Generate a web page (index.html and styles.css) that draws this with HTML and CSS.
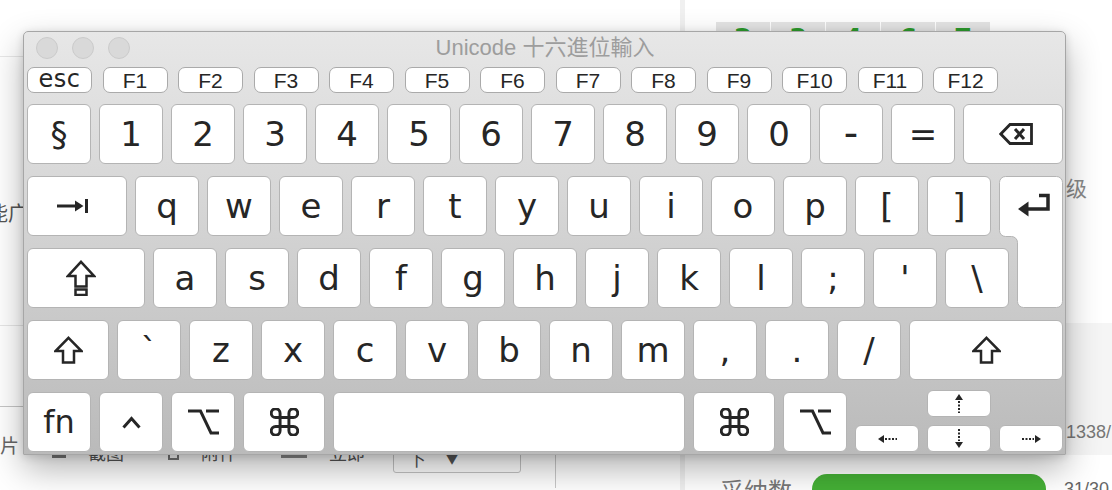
FILE: index.html
```html
<!DOCTYPE html>
<html lang="zh">
<head>
  <meta charset="UTF-8">
  <meta name="viewport" content="width=device-width, initial-scale=1.0">
  <title>Keyboard Viewer</title>
  <link rel="stylesheet" href="styles.css">
</head>
<body>
  <div class="page">
    <section class="main">
      <div class="main-head"></div>
      <div class="intro"><p>能广告</p></div>
      <div class="editor"></div>
      <div class="toolbar">
        <div class="toolbar-left">
          <span class="tb-label">图片</span>
          <div class="tools">
            <span class="tool"><i class="ico ico-shot"></i>截图</span>
            <span class="tool"><i class="ico ico-file"></i>附件</span>
            <span class="tool"><i class="ico ico-now"></i>立即</span>
            <span class="select">下 <b>▼</b></span>
          </div>
        </div>
      </div>
    </section>

    <aside class="side">
      <div class="pager">
        <span>2</span><span>3</span><span>4</span><span>6</span><span>7</span>
      </div>
      <div class="level">级</div>
      <div class="stats"><span>1338/</span></div>
      <div class="adopt">
        <span class="adopt-label">采纳数</span>
        <span class="adopt-bar"></span>
        <span class="adopt-num">31/30</span>
      </div>
    </aside>
  </div>

  <div class="kbd">
    <div class="kbd-titlebar">
      <div class="lights"><span></span><span></span><span></span></div>
      <div class="kbd-title">Unicode 十六進位輸入</div>
      <div></div>
    </div>

    <div class="fn-row">
      <div class="fkey fkey-esc">esc</div>
      <div class="fkey">F1</div>
      <div class="fkey">F2</div>
      <div class="fkey">F3</div>
      <div class="fkey">F4</div>
      <div class="fkey">F5</div>
      <div class="fkey">F6</div>
      <div class="fkey">F7</div>
      <div class="fkey">F8</div>
      <div class="fkey">F9</div>
      <div class="fkey">F10</div>
      <div class="fkey">F11</div>
      <div class="fkey">F12</div>
    </div>

    <div class="keys">
      <div class="row">
        <div class="key">§</div>
        <div class="key">1</div>
        <div class="key">2</div>
        <div class="key">3</div>
        <div class="key">4</div>
        <div class="key">5</div>
        <div class="key">6</div>
        <div class="key">7</div>
        <div class="key">8</div>
        <div class="key">9</div>
        <div class="key">0</div>
        <div class="key key-minus">-</div>
        <div class="key">=</div>
        <div class="key key-grow key-delete">
          <svg width="34" height="22" viewBox="0 0 34 22">
            <path d="M11 1.5 H32.5 V20.5 H11 L1.8 11 Z" fill="none" stroke="#262626" stroke-width="2.8" stroke-linejoin="miter"/>
            <path d="M16 6 L25 16 M25 6 L16 16" stroke="#262626" stroke-width="3"/>
          </svg>
        </div>
      </div>

      <div class="mid">
        <div class="row row-tab">
          <div class="key key-tab">
            <svg width="32" height="16" viewBox="0 0 32 16">
              <rect x="0" y="6.5" width="20" height="3" fill="#262626"/>
              <path d="M26.5 8 L18 2.5 V13.5 Z" fill="#262626"/>
              <rect x="28" y="1" width="3" height="14" fill="#262626"/>
            </svg>
          </div>
          <div class="key">q</div>
          <div class="key">w</div>
          <div class="key">e</div>
          <div class="key">r</div>
          <div class="key">t</div>
          <div class="key">y</div>
          <div class="key">u</div>
          <div class="key">i</div>
          <div class="key">o</div>
          <div class="key">p</div>
          <div class="key">[</div>
          <div class="key">]</div>
        </div>
        <div class="row row-caps">
          <div class="key key-caps">
            <svg width="30" height="36" viewBox="0 0 30 36">
              <path d="M15 1.8 L28 16 H20.5 V26.5 H9.5 V16 H2 Z" fill="none" stroke="#262626" stroke-width="2.5" stroke-linejoin="miter"/>
              <rect x="9.5" y="29.5" width="11" height="5.5" fill="none" stroke="#262626" stroke-width="2.5"/>
            </svg>
          </div>
          <div class="key">a</div>
          <div class="key">s</div>
          <div class="key">d</div>
          <div class="key">f</div>
          <div class="key">g</div>
          <div class="key">h</div>
          <div class="key">j</div>
          <div class="key">k</div>
          <div class="key">l</div>
          <div class="key">;</div>
          <div class="key">'</div>
          <div class="key">\</div>
        </div>
        <div class="key-return">
          <svg width="64" height="132" viewBox="0 0 64 132">
            <path d="M6.5 0.5 H57.5 A6 6 0 0 1 63.5 6.5 V125.5 A6 6 0 0 1 57.5 131.5 H24.5 A6 6 0 0 1 18.5 125.5 V66.5 A6 6 0 0 0 12.5 60.5 H6.5 A6 6 0 0 1 0.5 54.5 V6.5 A6 6 0 0 1 6.5 0.5 Z" fill="#fff" stroke="#b4b4b4"/>
            <path d="M40 19.5 H49 V33 H27" fill="none" stroke="#262626" stroke-width="3.5"/>
            <path d="M19 33 L29.5 25.5 V40.5 Z" fill="#262626"/>
          </svg>
        </div>
      </div>

      <div class="row">
        <div class="key key-lshift">
          <svg width="29" height="28" viewBox="0 0 29 28">
            <path d="M14.5 1.8 L27.5 15 H20 V26.5 H9 V15 H1.5 Z" fill="none" stroke="#262626" stroke-width="2.5"/>
          </svg>
        </div>
        <div class="key">`</div>
        <div class="key">z</div>
        <div class="key">x</div>
        <div class="key">c</div>
        <div class="key">v</div>
        <div class="key">b</div>
        <div class="key">n</div>
        <div class="key">m</div>
        <div class="key">,</div>
        <div class="key">.</div>
        <div class="key">/</div>
        <div class="key key-grow">
          <svg width="29" height="28" viewBox="0 0 29 28">
            <path d="M14.5 1.8 L27.5 15 H20 V26.5 H9 V15 H1.5 Z" fill="none" stroke="#262626" stroke-width="2.5"/>
          </svg>
        </div>
      </div>

      <div class="row">
        <div class="key key-fn">fn</div>
        <div class="key">
          <svg width="19" height="13" viewBox="0 0 19 13">
            <path d="M1.5 11.5 L9.5 2.5 L17.5 11.5" fill="none" stroke="#262626" stroke-width="3"/>
          </svg>
        </div>
        <div class="key">
          <svg width="31" height="26" viewBox="0 0 31 26">
            <path d="M0 2 H12.5 L23 24 H31 M18 2 H31" fill="none" stroke="#262626" stroke-width="3"/>
          </svg>
        </div>
        <div class="key key-cmd">
          <svg width="29" height="28" viewBox="2.5 2.5 19 19">
            <path d="M18 3a3 3 0 0 0-3 3v12a3 3 0 0 0 3 3 3 3 0 0 0 3-3 3 3 0 0 0-3-3H6a3 3 0 0 0-3 3 3 3 0 0 0 3 3 3 3 0 0 0 3-3V6a3 3 0 0 0-3-3 3 3 0 0 0-3 3 3 3 0 0 0 3 3h12a3 3 0 0 0 3-3 3 3 0 0 0-3-3z" fill="none" stroke="#262626" stroke-width="2"/>
          </svg>
        </div>
        <div class="key key-space"></div>
        <div class="key key-cmd">
          <svg width="29" height="28" viewBox="2.5 2.5 19 19">
            <path d="M18 3a3 3 0 0 0-3 3v12a3 3 0 0 0 3 3 3 3 0 0 0 3-3 3 3 0 0 0-3-3H6a3 3 0 0 0-3 3 3 3 0 0 0 3 3 3 3 0 0 0 3-3V6a3 3 0 0 0-3-3 3 3 0 0 0-3 3 3 3 0 0 0 3 3h12a3 3 0 0 0 3-3 3 3 0 0 0-3-3z" fill="none" stroke="#262626" stroke-width="2"/>
          </svg>
        </div>
        <div class="key">
          <svg width="31" height="26" viewBox="0 0 31 26">
            <path d="M0 2 H12.5 L23 24 H31 M18 2 H31" fill="none" stroke="#262626" stroke-width="3"/>
          </svg>
        </div>
        <div class="arrows">
          <div class="key akey akey-up">
            <svg width="8" height="19" viewBox="0 0 8 19">
              <path d="M4 0 L8 6 H0 Z" fill="#262626"/>
              <path d="M4 7 V19" stroke="#262626" stroke-width="2" stroke-dasharray="2 1.5"/>
            </svg>
          </div>
          <div class="key akey akey-left">
            <svg width="19" height="8" viewBox="0 0 19 8">
              <path d="M0 4 L6 0 V8 Z" fill="#262626"/>
              <path d="M7 4 H19" stroke="#262626" stroke-width="2" stroke-dasharray="2 1.5"/>
            </svg>
          </div>
          <div class="key akey akey-down">
            <svg width="8" height="19" viewBox="0 0 8 19">
              <path d="M4 0 V12" stroke="#262626" stroke-width="2" stroke-dasharray="2 1.5"/>
              <path d="M4 19 L8 13 H0 Z" fill="#262626"/>
            </svg>
          </div>
          <div class="key akey akey-right">
            <svg width="19" height="8" viewBox="0 0 19 8">
              <path d="M0 4 H12" stroke="#262626" stroke-width="2" stroke-dasharray="2 1.5"/>
              <path d="M19 4 L13 0 V8 Z" fill="#262626"/>
            </svg>
          </div>
        </div>
      </div>
    </div>
  </div>
</body>
</html>
```

FILE: styles.css
```css
body {
  margin: 0;
  width: 1112px;
  height: 490px;
  overflow: hidden;
  position: relative;
  background: #fff;
  font-family: "Noto Sans CJK SC", "Noto Sans", sans-serif;
}

/* page behind the keyboard window */
.page {
  display: flex;
  height: 490px;
  overflow: hidden;
}
.main {
  width: 680px;
  flex: none;
}
.main-head {
  height: 56px;
  border-bottom: 1px solid #e8e8e8;
}
.intro {
  height: 269px;
  padding-top: 143px;
  box-sizing: border-box;
  border-bottom: 1px solid #e6e6e6;
}
.intro p {
  margin: 0 0 0 -12px;
  font-size: 20px;
  line-height: 26px;
  color: #555;
}
.editor {
  height: 80px;
  border-bottom: 1px solid #c6c6c6;
}
.toolbar-left {
  width: 555px;
  height: 81px;
  border-right: 1px solid #c9c9c9;
  display: flex;
  align-items: flex-start;
}
.tb-label {
  margin: 25px 0 0 -19px;
  font-size: 19px;
  line-height: 26px;
  color: #666;
}
.tools {
  margin: 36px 0 0 33px;
  height: 30px;
  display: flex;
  align-items: center;
  gap: 44px;
  font-size: 18px;
  color: #555;
}
.tool {
  display: flex;
  align-items: center;
  gap: 22px;
  align-self: flex-start;
  margin-top: -4px;
  line-height: 26px;
}
.ico {
  display: block;
  width: 14px;
  height: 12px;
  background: #777;
}
.ico-file {
  background: none;
  border: 2px solid #777;
  width: 7px;
}
.ico-now {
  width: 26px;
  background: #888;
}
.select {
  margin-left: -16px;
  width: 128px;
  height: 30px;
  border: 1px solid #c4c4c4;
  border-radius: 3px;
  display: flex;
  align-items: center;
  gap: 20px;
  padding-left: 14px;
  box-sizing: border-box;
}
.select b {
  font-size: 12px;
  font-weight: normal;
}

.side {
  flex: 1;
  border-left: 5px solid #f0f0f0;
}
.pager {
  display: flex;
  gap: 1px;
  margin: 22px 0 0 31px;
}
.pager span {
  width: 54px;
  height: 40px;
  padding-top: 4px;
  box-sizing: border-box;
  background: #e4e4e4;
  color: #2c9a2c;
  font: bold 26px/26px "DejaVu Sans", sans-serif;
  text-align: center;
}
.level {
  margin: 113px 0 0 381px;
  font-size: 21px;
  line-height: 24px;
  color: #888;
}
.stats {
  margin-top: 124px;
  height: 132px;
  background: #f5f5f5;
  padding: 98px 0 0 381px;
  box-sizing: border-box;
  font: 18px/22px "Liberation Sans", sans-serif;
  color: #777;
}
.adopt {
  margin: 19px 0 0 35px;
  display: flex;
  align-items: center;
  height: 30px;
}
.adopt-label {
  font-size: 24px;
  color: #777;
  width: 92px;
}
.adopt-bar {
  width: 234px;
  height: 30px;
  border-radius: 15px;
  background: #45b036;
}
.adopt-num {
  margin-left: 18px;
  font: 18px "Liberation Sans", sans-serif;
  color: #666;
}

/* keyboard viewer window */
.kbd {
  position: absolute;
  left: 23px;
  top: 31px;
  width: 1043px;
  box-sizing: border-box;
  border: 1px solid #a6a6a6;
  border-radius: 5px 5px 0 0;
  padding: 0 2px 2px 3px;
  background: linear-gradient(#e7e7e7, #d6d6d6 40%, #bababa);
  box-shadow: 0 14px 34px rgba(0, 0, 0, 0.3), 0 2px 8px rgba(0, 0, 0, 0.14);
}
.kbd-titlebar {
  height: 35px;
  display: grid;
  grid-template-columns: 1fr auto 1fr;
  align-items: start;
  padding-top: 5px;
  box-sizing: border-box;
}
.lights {
  display: flex;
  gap: 14px;
  margin-left: 9px;
}
.lights span {
  width: 22px;
  height: 22px;
  border-radius: 50%;
  background: #d9d9d9;
  border: 1px solid #cbcbcb;
  box-sizing: border-box;
}
.kbd-title {
  font: 22px/22px "Liberation Sans", "Noto Sans CJK TC", sans-serif;
  color: #9d9d9d;
}

.fn-row {
  display: flex;
  gap: 10.5px;
  height: 26px;
  margin-bottom: 11px;
}
.fkey {
  width: 65px;
  background: #fff;
  border: 1px solid #aaa;
  border-radius: 7px;
  box-sizing: border-box;
  display: flex;
  align-items: center;
  justify-content: center;
  font: 21px/1 "Liberation Sans", sans-serif;
  color: #262626;
}
.fkey-esc {
  font: 24px/1 "DejaVu Sans", sans-serif;
  letter-spacing: 0.5px;
  padding-bottom: 2px;
}

.keys {
  display: flex;
  flex-direction: column;
  gap: 12px;
}
.row {
  display: flex;
  gap: 8px;
  height: 60px;
}
.key {
  width: 64px;
  flex: none;
  background: #fff;
  border: 1px solid #b4b4b4;
  border-radius: 6px;
  box-sizing: border-box;
  display: flex;
  align-items: center;
  justify-content: center;
  font: 34px/1 "DejaVu Sans", sans-serif;
  color: #262626;
}
.key-minus {
  font-size: 40px;
  padding-bottom: 3px;
}
.key-grow {
  flex: 1;
}
.key-delete svg {
  margin-left: 6px;
}
.key-tab {
  width: 100px;
}
.key-tab svg {
  margin-right: 8px;
}
.key-caps {
  width: 118px;
}
.key-caps svg {
  margin-right: 10px;
}
.key-lshift {
  width: 82px;
}
.key-fn {
  font-size: 32px;
}
.key-cmd {
  width: 82px;
}
.key-space {
  width: 352px;
}

.mid {
  display: grid;
  grid-template-columns: 982px 46px;
  grid-template-rows: 60px 60px;
  column-gap: 8px;
  row-gap: 12px;
}
.row-tab {
  grid-column: 1;
  grid-row: 1;
}
.row-caps {
  grid-column: 1;
  grid-row: 2;
}
.key-return {
  grid-column: 2;
  grid-row: 1 / 3;
  width: 64px;
  height: 132px;
  margin-left: -18px;
}
.key-return svg {
  display: block;
}

.arrows {
  display: grid;
  grid-template-columns: 64px 64px 64px;
  grid-template-rows: 27px 27px;
  column-gap: 8px;
  row-gap: 8px;
  margin-top: -2px;
}
.akey {
  width: auto;
}
.akey-up {
  grid-column: 2;
  grid-row: 1;
}
.akey-left {
  grid-column: 1;
  grid-row: 2;
}
.akey-down {
  grid-column: 2;
  grid-row: 2;
}
.akey-right {
  grid-column: 3;
  grid-row: 2;
}
```
